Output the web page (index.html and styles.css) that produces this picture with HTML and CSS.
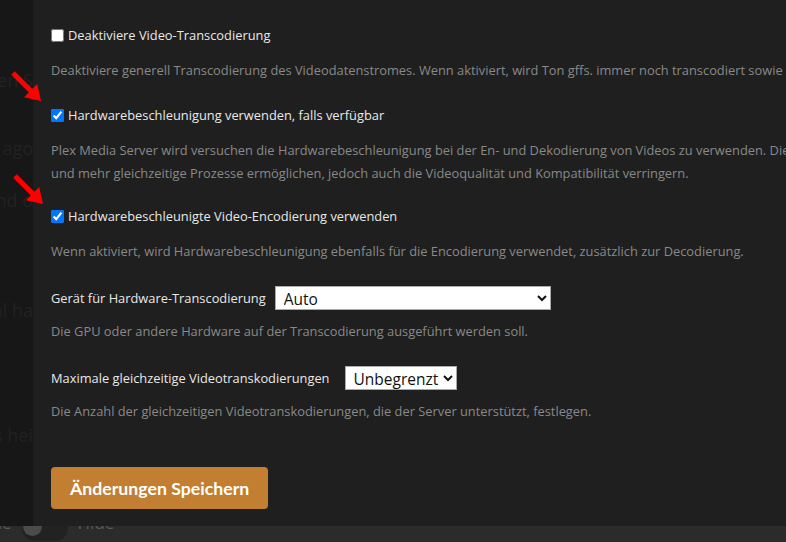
FILE: index.html
```html
<!DOCTYPE html>
<html>
<head>
    <title>Transcoder Einstellungen</title>
    <link rel="stylesheet" href="styles.css">
</head>
<body>
    <div class="page">
        <div class="backdrop">
            <div class="bg-main">
                <div class="bg-side">
                    <div class="bg-line"><span>Einstellungen S</span></div>
                    <div class="bg-line"><span>vor 3 Tagen ago</span></div>
                    <div class="bg-line"><span>Filme und o</span></div>
                    <div class="bg-line"><span>Gesamtzahl ha</span></div>
                    <div class="bg-line"><span>Bibliotheks hei</span></div>
                </div>
            </div>
            <div class="bg-footer">
                <span class="bg-word">Title</span>
                <span class="toggle"><span class="knob"></span></span>
                <span class="bg-word">Hide</span>
            </div>
        </div>

        <div class="modal">
            <div class="setting">
                <label class="row">
                    <input type="checkbox">
                    <span class="label">Deaktiviere Video-Transcodierung</span>
                </label>
                <p class="desc">Deaktiviere generell Transcodierung des Videodatenstromes. Wenn aktiviert, wird Ton gffs. immer noch transcodiert sowie Inhalte mit eingebrannten Untertiteln.</p>
            </div>

            <div class="setting setting-long">
                <label class="row">
                    <input type="checkbox" checked>
                    <span class="label">Hardwarebeschleunigung verwenden, falls verfügbar</span>
                </label>
                <p class="desc">Plex Media Server wird versuchen die Hardwarebeschleunigung bei der En- und Dekodierung von Videos zu verwenden. Dies kann die CPU-Auslastung reduzieren<br>und mehr gleichzeitige Prozesse ermöglichen, jedoch auch die Videoqualität und Kompatibilität verringern.</p>
            </div>

            <div class="setting">
                <label class="row">
                    <input type="checkbox" checked>
                    <span class="label">Hardwarebeschleunigte Video-Encodierung verwenden</span>
                </label>
                <p class="desc">Wenn aktiviert, wird Hardwarebeschleunigung ebenfalls für die Encodierung verwendet, zusätzlich zur Decodierung.</p>
            </div>

            <div class="setting setting-field">
                <div class="row">
                    <label class="label field-label" for="device">Gerät für Hardware-Transcodierung</label>
                    <select id="device" class="select select-wide">
                        <option>Auto</option>
                    </select>
                </div>
                <p class="desc desc-tight">Die GPU oder andere Hardware auf der Transcodierung ausgeführt werden soll.</p>
            </div>

            <div class="setting setting-field">
                <div class="row">
                    <label class="label field-label field-label-wide" for="maxjobs">Maximale gleichzeitige Videotranskodierungen</label>
                    <select id="maxjobs" class="select">
                        <option>Unbegrenzt</option>
                    </select>
                </div>
                <p class="desc desc-tight">Die Anzahl der gleichzeitigen Videotranskodierungen, die der Server unterstützt, festlegen.</p>
            </div>

            <button class="save" type="button">Änderungen Speichern</button>
        </div>

        <!-- markierungen aus dem screenshot -->
        <svg class="arrow arrow-1" width="34" height="34" viewBox="-3 -3 34 34">
            <polygon points="1.8,-1.8 19.4,15.8 24.2,11 28,28 11,24.2 15.8,19.4 -1.8,1.8" fill="#ff0000"/>
        </svg>
        <svg class="arrow arrow-2" width="34" height="34" viewBox="-3 -3 34 34">
            <polygon points="1.8,-1.8 19.4,15.8 24.2,11 28,28 11,24.2 15.8,19.4 -1.8,1.8" fill="#ff0000"/>
        </svg>
    </div>
</body>
</html>
```

FILE: styles.css
```css
body {
    margin: 0;
    overflow: hidden;
    font-family: "Open Sans", "Noto Sans", sans-serif;
    font-size: 12.85px;
}

.page {
    position: relative;
    width: 786px;
    height: 542px;
    overflow: hidden;
}

/* seite hinter dem dialog */
.backdrop {
    display: flex;
    flex-direction: column;
    height: 100%;
}

.bg-main {
    flex: 0 0 526px;
    background-color: #171717;
}

.bg-side {
    width: 33px;
    overflow: hidden;
    color: #222222;
    font-size: 18px;
}

.bg-line {
    display: flex;
    justify-content: flex-end;
    white-space: nowrap;
    line-height: 24px;
}

.bg-line:nth-child(1) { margin-top: 68px; }
.bg-line:nth-child(2) { margin-top: 44px; }
.bg-line:nth-child(3) { margin-top: 28px; }
.bg-line:nth-child(4) { margin-top: 86px; }
.bg-line:nth-child(5) { margin-top: 101px; }

.bg-footer {
    flex: 1;
    display: flex;
    align-items: flex-start;
    gap: 10px;
    overflow: hidden;
    background-color: #2b2b2b;
    margin-left: -22px;
}

.bg-word {
    margin-top: -15px;
    color: #5a5a5a;
    font-size: 17px;
    line-height: 24px;
}

.toggle {
    display: flex;
    align-items: center;
    width: 45px;
    height: 26px;
    margin-top: -11px;
    padding-left: 1px;
    border-radius: 13px;
    background-color: #222222;
}

.knob {
    width: 19px;
    height: 19px;
    margin-top: -4px;
    border-radius: 50%;
    background-color: #4b4b4b;
}

/* dialog */
.modal {
    position: absolute;
    left: 33px;
    top: 0;
    width: 1000px;
    height: 526px;
    box-sizing: border-box;
    padding: 23px 18px;
    background-color: #1f1f1f;
}

.setting {
    margin-bottom: 21px;
}

.setting-long {
    margin-bottom: 19px;
}

.setting-field {
    margin-top: 23px;
}

.row {
    display: flex;
    align-items: center;
    height: 24px;
}

.row input[type="checkbox"] {
    width: 13px;
    height: 13px;
    margin: 0 4px 0 0;
}

.label {
    color: #e8e8e8;
}

.field-label {
    margin-right: 9px;
}

.field-label-wide {
    margin-right: 15px;
}

.desc {
    margin: 12px 0 0 0;
    line-height: 23px;
    color: #898989;
    white-space: nowrap;
}

.desc-tight {
    margin-top: 10px;
}

.select {
    height: 24px;
    padding: 0 1px 0 4px;
    border: 1px solid #a9a9a9;
    border-radius: 0;
    background-color: #ffffff;
    color: #111111;
    font-family: "Open Sans", "Noto Sans", sans-serif;
    font-size: 15.5px;
}

.select-wide {
    width: 276px;
}

.save {
    display: block;
    margin-top: 44px;
    height: 42px;
    padding: 0 19px;
    border: none;
    border-radius: 4px;
    background-color: #c27e31;
    color: #ffffff;
    font-family: Lato, "Open Sans", sans-serif;
    font-size: 17.7px;
    font-weight: bold;
    cursor: pointer;
}

.arrow {
    position: absolute;
}

.arrow-1 {
    left: 10px;
    top: 70px;
}

.arrow-2 {
    left: 12px;
    top: 173px;
}
```
